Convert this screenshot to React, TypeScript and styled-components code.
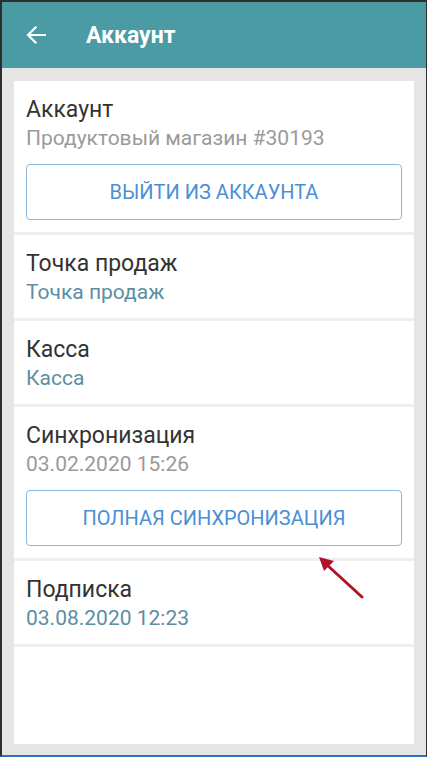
import React from "react";
import styled, { createGlobalStyle } from "styled-components";

const GlobalStyle = createGlobalStyle`
  html, body {
    margin: 0;
    padding: 0;
    background: #e5e5e5;
    font-family: Roboto, "Noto Sans", "Liberation Sans", sans-serif;
  }
  * { box-sizing: border-box; }
`;

const Frame = styled.div`
  position: relative;
  width: 427px;
  height: 757px;
  display: flex;
  flex-direction: column;
  border-top: 2px solid #2e2e2e;
  border-left: 2px solid #2e2e2e;
  border-right: 1px solid #2e2e2e;
  border-bottom: 2px solid #2f6fbf;
  background: #e5e5e5;
  overflow: hidden;
`;

const Toolbar = styled.header`
  height: 66px;
  flex-shrink: 0;
  display: flex;
  align-items: center;
  background: #4a9ba4;
  color: #fff;
  padding-left: 24px;
  gap: 40px;
`;

const Title = styled.h1`
  margin: 0;
  font-size: 23px;
  font-weight: 700;
`;

const Body = styled.main`
  flex: 1;
  display: flex;
  padding: 13px 12px 11px 12px;
`;

const Card = styled.div`
  flex: 1;
  display: flex;
  flex-direction: column;
  background: #fff;
`;

const Row = styled.section`
  padding: 15px 12px 12px 12px;
  border-bottom: 3px solid #efefef;
  display: flex;
  flex-direction: column;
`;

const Label = styled.div`
  font-size: 23px;
  line-height: 28px;
  color: #333;
`;

const Value = styled.div<{ tone?: "gray" | "blue" }>`
  font-size: 21px;
  line-height: 28px;
  color: ${({ tone }) => (tone === "blue" ? "#5b8ea3" : "#9a9a9a")};
`;

const OutlineButton = styled.button`
  margin-top: 12px;
  height: 56px;
  width: 100%;
  background: #fff;
  border: 1.5px solid #8cb6e2;
  border-radius: 4px;
  color: #4a8fd4;
  font-family: inherit;
  font-size: 20px;
  text-transform: uppercase;
  cursor: pointer;
`;

const Pointer = styled.svg`
  position: absolute;
  left: 312px;
  top: 550px;
  pointer-events: none;
`;

function BackArrow() {
  return (
    <svg width="20" height="18" viewBox="0 0 20 18" fill="none">
      <path d="M19 9H2.5M9.5 1.5L2 9l7.5 7.5" stroke="#fff" strokeWidth="2.2" strokeLinecap="square" />
    </svg>
  );
}

export default function App() {
  return (
    <>
      <GlobalStyle />
      <Frame>
        <Toolbar>
          <BackArrow />
          <Title>Аккаунт</Title>
        </Toolbar>
        <Body>
          <Card>
            <Row>
              <Label>Аккаунт</Label>
              <Value>Продуктовый магазин #30193</Value>
              <OutlineButton>Выйти из аккаунта</OutlineButton>
            </Row>
            <Row>
              <Label>Точка продаж</Label>
              <Value tone="blue">Точка продаж</Value>
            </Row>
            <Row>
              <Label>Касса</Label>
              <Value tone="blue">Касса</Value>
            </Row>
            <Row>
              <Label>Синхронизация</Label>
              <Value>03.02.2020 15:26</Value>
              <OutlineButton>Полная синхронизация</OutlineButton>
            </Row>
            <Row>
              <Label>Подписка</Label>
              <Value tone="blue">03.08.2020 12:23</Value>
            </Row>
          </Card>
        </Body>
        <Pointer width="56" height="52" viewBox="0 0 56 52">
          <path d="M48 45L12 12" stroke="#b3122b" strokeWidth="3" strokeLinecap="round" />
          <path d="M5 5L20 9L10 19Z" fill="#b3122b" />
        </Pointer>
      </Frame>
    </>
  );
}
